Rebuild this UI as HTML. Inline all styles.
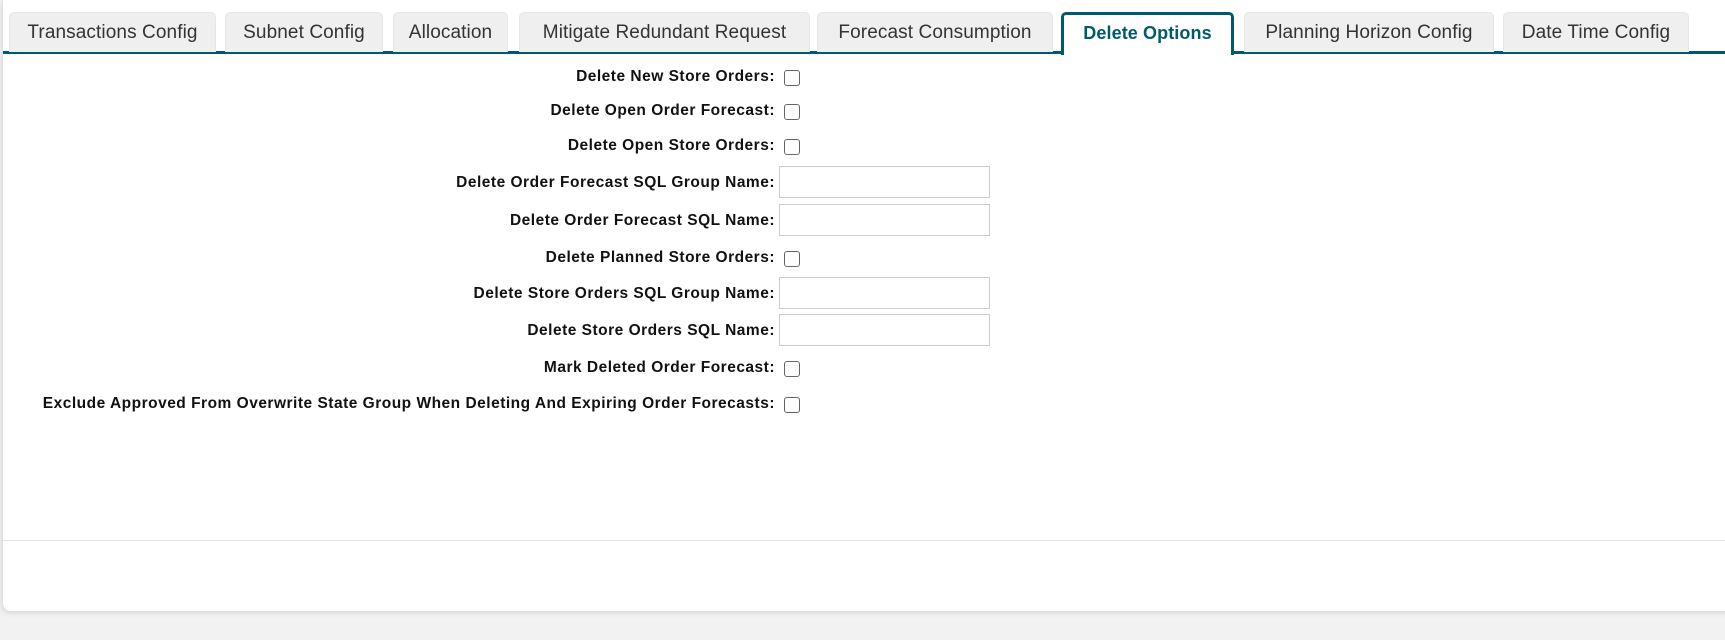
<!DOCTYPE html>
<html><head><style>
body{margin:0;width:1725px;height:640px;background:#f2f2f2;font-family:"Liberation Sans",sans-serif;position:relative;overflow:hidden}
.card{position:absolute;left:2px;top:0;width:1740px;height:611px;background:#fff;border-left:1px solid #e0e0e0;border-radius:0 0 0 8px;box-shadow:0 2px 6px rgba(0,0,0,.12)}
.tab{position:absolute;top:12px;height:40px;background:#efefef;border:1px solid #e6e6e6;border-bottom:none;border-radius:5px 5px 0 0;box-sizing:border-box;font-size:19px;color:#333;text-align:center;line-height:40px;letter-spacing:0.1px;z-index:2}
.tab.act{background:#fff;border:3px solid #005a6e;border-bottom:none;color:#005a6e;font-weight:bold;height:43px;line-height:37px;font-size:18px;z-index:3}
.line{position:absolute;left:3px;top:51px;width:1725px;height:3px;background:#005a6e;z-index:1}
.lbl{position:absolute;right:950px;font-size:15.5px;letter-spacing:0.5px;font-weight:bold;color:#111;white-space:nowrap}
.cb{position:absolute;left:784px;width:14px;height:14px;border:1.5px solid #666;border-radius:3px;background:#fff}
.tb{position:absolute;left:779px;width:211px;height:32px;border:1px solid #ccc;box-sizing:border-box;background:#fff}
.div{position:absolute;left:3px;top:540px;width:1725px;height:1px;background:#e2e2e2}
</style></head><body>
<div class="card"></div>
<div class="line"></div>
<div class="tab" style="left:9px;width:207px">Transactions Config</div>
<div class="tab" style="left:225px;width:158px">Subnet Config</div>
<div class="tab" style="left:393px;width:115px">Allocation</div>
<div class="tab" style="left:519px;width:291px">Mitigate Redundant Request</div>
<div class="tab" style="left:817px;width:236px">Forecast Consumption</div>
<div class="tab act" style="left:1061px;width:173px">Delete Options</div>
<div class="tab" style="left:1244px;width:250px">Planning Horizon Config</div>
<div class="tab" style="left:1503px;width:186px">Date Time Config</div>

<div class="lbl" style="top:68px">Delete New Store Orders:</div><div class="cb" style="top:70px"></div>
<div class="lbl" style="top:102px">Delete Open Order Forecast:</div><div class="cb" style="top:104px"></div>
<div class="lbl" style="top:137px">Delete Open Store Orders:</div><div class="cb" style="top:139px"></div>
<div class="lbl" style="top:174px">Delete Order Forecast SQL Group Name:</div><div class="tb" style="top:166px"></div>
<div class="lbl" style="top:212px">Delete Order Forecast SQL Name:</div><div class="tb" style="top:204px"></div>
<div class="lbl" style="top:249px">Delete Planned Store Orders:</div><div class="cb" style="top:251px"></div>
<div class="lbl" style="top:285px">Delete Store Orders SQL Group Name:</div><div class="tb" style="top:277px"></div>
<div class="lbl" style="top:322px">Delete Store Orders SQL Name:</div><div class="tb" style="top:314px"></div>
<div class="lbl" style="top:359px">Mark Deleted Order Forecast:</div><div class="cb" style="top:361px"></div>
<div class="lbl" style="top:395px">Exclude Approved From Overwrite State Group When Deleting And Expiring Order Forecasts:</div><div class="cb" style="top:397px"></div>
<div class="div"></div>
</body></html>
